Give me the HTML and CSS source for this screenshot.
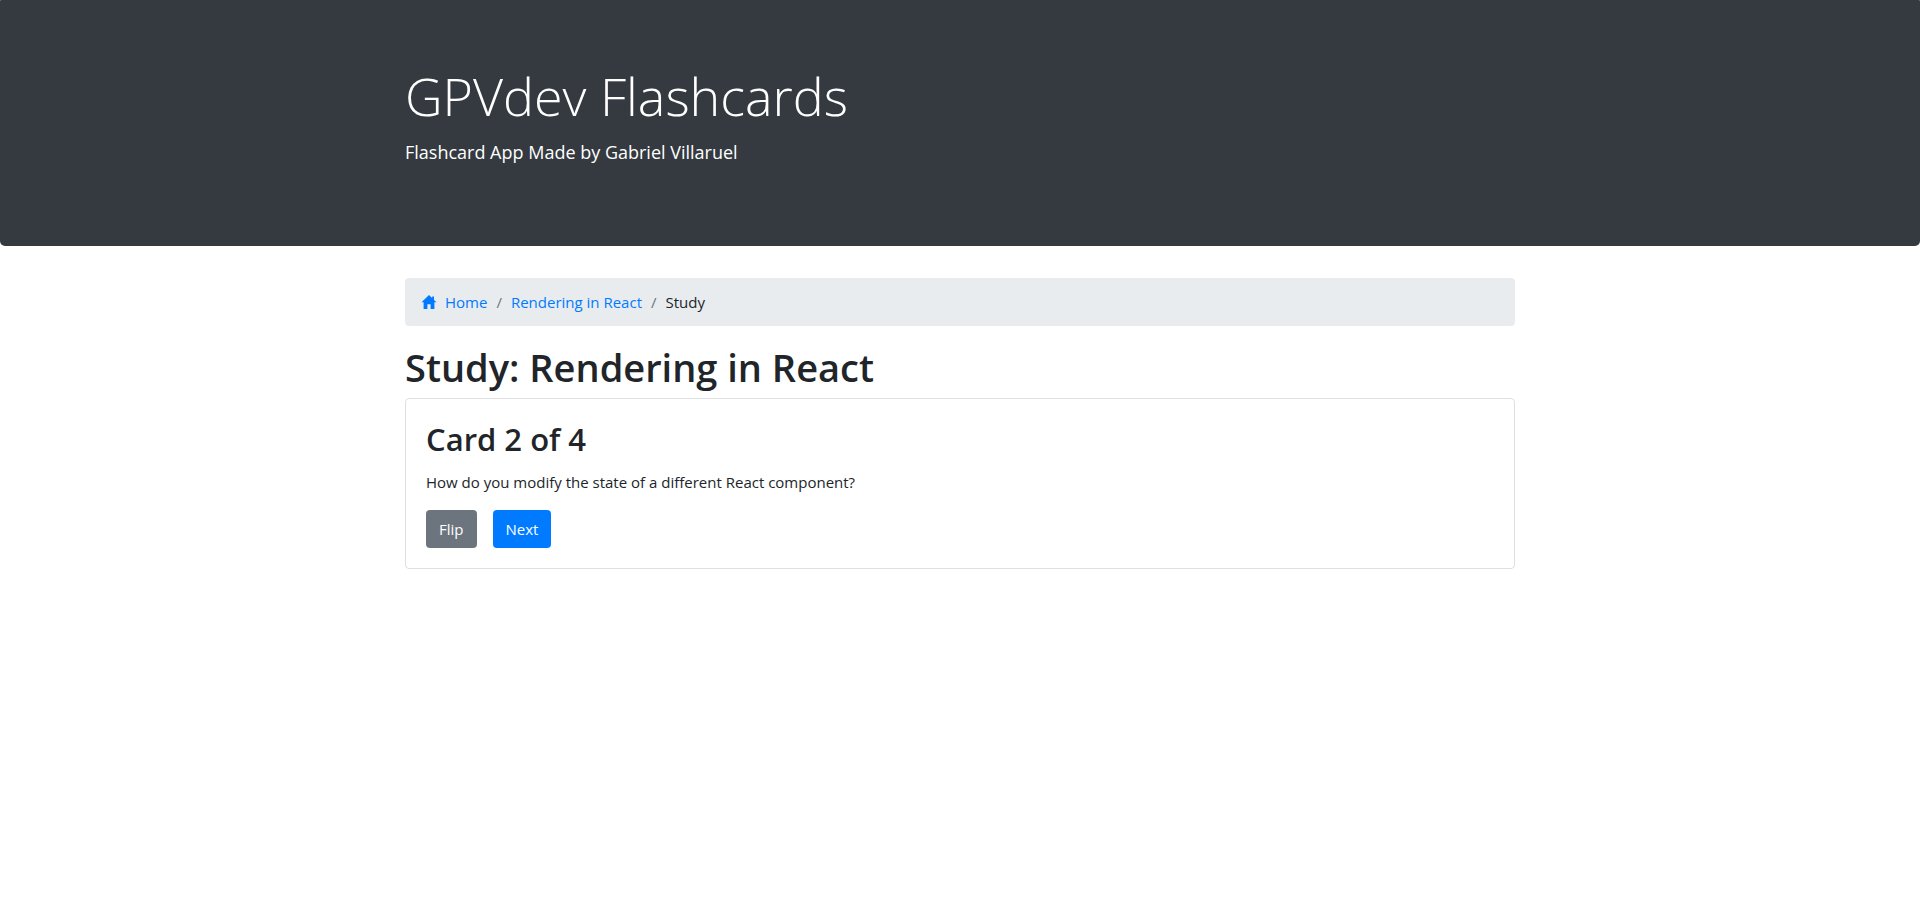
FILE: index.html
```html
<!DOCTYPE html>
<html lang="en">
<head>
<meta charset="utf-8">
<title>GPVdev Flashcards</title>
<link rel="stylesheet" href="styles.css">
</head>
<body>
<header class="jumbotron">
  <div class="container">
    <h1 class="display">GPVdev Flashcards</h1>
    <p class="lead">Flashcard App Made by Gabriel Villaruel</p>
  </div>
</header>
<main class="container">
  <nav aria-label="breadcrumb">
    <ol class="breadcrumb">
      <li><a class="home" href="#"><svg class="icon" viewBox="0 0 16 16" aria-hidden="true"><path d="M8 1 0.5 8.3H2.6V15H6.4V10.2H9.6V15H13.4V8.3H15.5L13 5.9V2.5H11.2V4.1Z"/></svg>Home</a></li>
      <li><a href="#">Rendering in React</a></li>
      <li aria-current="page">Study</li>
    </ol>
  </nav>
  <h2 class="title">Study: Rendering in React</h2>
  <section class="card">
    <h3 class="card-title">Card 2 of 4</h3>
    <p class="card-text">How do you modify the state of a different React component?</p>
    <div class="actions">
      <button type="button" class="btn btn-secondary">Flip</button>
      <button type="button" class="btn btn-primary">Next</button>
    </div>
  </section>
</main>
</body>
</html>
```
FILE: styles.css
```css
* { box-sizing: border-box; }
body {
  margin: 0;
  font-family: "Open Sans", "Noto Sans", sans-serif;
  font-size: 15px;
  line-height: 24px;
  color: #212529;
  background: #fff;
}
h1, h2, h3, p { margin: 0; }
a { color: #007bff; text-decoration: none; }
.container { width: 100%; max-width: 1140px; margin: 0 auto; padding: 0 15px; }
.jumbotron {
  margin-bottom: 32px;
  padding: 62px 32px 79px;
  color: #fff;
  background: #343a40;
  border-radius: 1px 1px 5px 5px;
}
.display { margin-bottom: 8px; font-size: 52px; font-weight: 300; line-height: 67px; }
.lead { font-size: 18px; font-weight: 400; line-height: 30px; }
.breadcrumb {
  display: flex;
  flex-wrap: wrap;
  margin: 0 0 16px;
  padding: 12px 16px;
  list-style: none;
  background: #e9ecef;
  border-radius: 4px;
}
.breadcrumb li + li::before { content: "/"; padding: 0 9px; color: #6c757d; }
.home { display: flex; align-items: center; gap: 8px; }
.icon { width: 16px; height: 16px; fill: currentColor; }
.title { margin-bottom: 6px; font-size: 38px; font-weight: 600; line-height: 50px; }
.card { padding: 20px; border: 1px solid #dfdfdf; border-radius: 4px; }
.card-title { margin-bottom: 10px; font-size: 31px; font-weight: 600; line-height: 41px; }
.card-text { margin-bottom: 16px; }
.actions { display: flex; gap: 16px; }
.btn {
  padding: 6px 12px;
  border: 1px solid transparent;
  border-radius: 4px;
  font: inherit;
  color: #fff;
  cursor: pointer;
}
.btn-secondary { background: #6c757d; }
.btn-primary { background: #007bff; }
```
